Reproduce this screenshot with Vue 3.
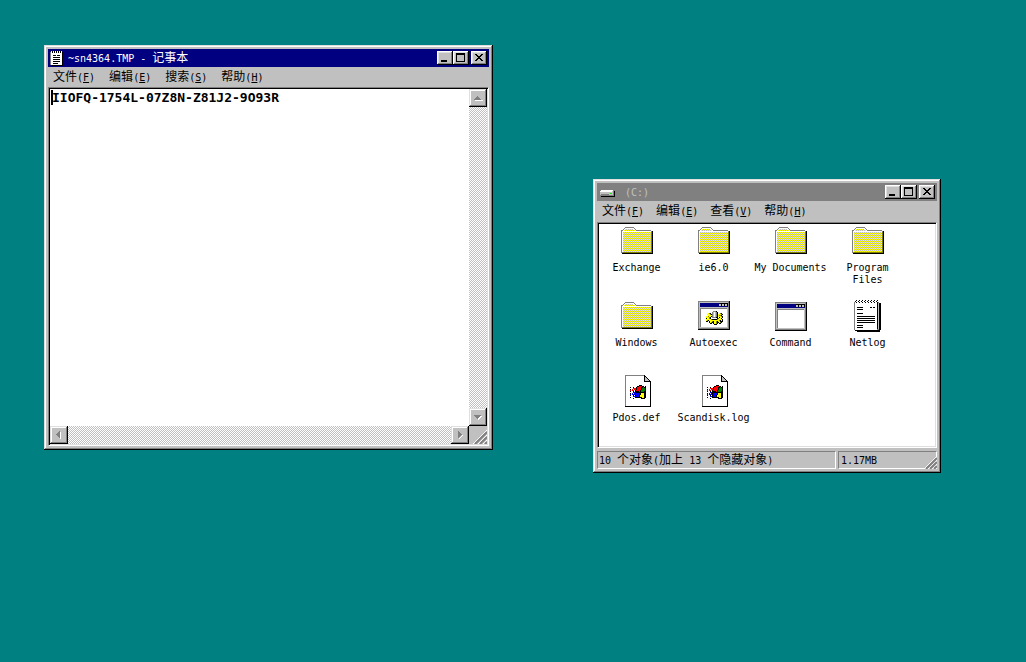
<script setup>
import { ref } from 'vue'

const noteMenus = [['文件', 'F'], ['编辑', 'E'], ['搜索', 'S'], ['帮助', 'H']]
const driveMenus = [['文件', 'F'], ['编辑', 'E'], ['查看', 'V'], ['帮助', 'H']]
const note = ref('IIOFQ-1754L-07Z8N-Z81J2-9O93R')

const files = [
  { name: 'Exchange', kind: 'folder' },
  { name: 'ie6.0', kind: 'folder' },
  { name: 'My Documents', kind: 'folder' },
  { name: 'Program Files', kind: 'folder' },
  { name: 'Windows', kind: 'folder' },
  { name: 'Autoexec', kind: 'batch' },
  { name: 'Command', kind: 'app' },
  { name: 'Netlog', kind: 'text' },
  { name: 'Pdos.def', kind: 'file' },
  { name: 'Scandisk.log', kind: 'file' },
]

const palette = { k: '#000', y: '#ff0', o: '#808000', g: '#808080', w: '#fff', s: '#c0c0c0', r: '#f00', n: '#008000', b: '#00f' }

function pixels(rows) {
  const out = []
  rows.forEach((row, y) => {
    let x = 0
    while (x < row.length) {
      let end = x + 1
      while (end < row.length && row[end] === row[x]) end++
      if (palette[row[x]]) out.push({ x, y, w: end - x, fill: palette[row[x]] })
      x = end
    }
  })
  return out
}

const gear = pixels([
  '.......gggk......',
  '......gswsgk.....',
  '..yok.gswsgk.yok.',
  '.yyyokgswsgkyyyok',
  '..yyyygswsgkyook.',
  'yyoyykgswsgkyyyok',
  'yyyok.ggggkk.kyyk',
  'kyyok......koyyk.',
  'yyyyyokkkkkoyyyyk',
  'yokyyyyyyyyyyokyk',
  'kk.kyyokyyokyykkk',
  '...kyokkyyokkyok.',
  '....kk.kyyok.kk..',
  '........kkk......',
])

const flag = pixels([
  '.........kkk....',
  '.......kkrrrkk.k',
  'k..k..krrrrkknkk',
  '...rrrkrrrrknnnk',
  'k.r.rrkrrrrknnnk',
  'r.rr.krrrrknnnnk',
  'k..k.kkkkrknnnkk',
  '...bbkkkkkkkkkkk',
  'k.b.bkbbbbkyyykk',
  'b.bbbkbbbbkyyykk',
  'k..k.kbbbkyyyykk',
  '...bbkbbbkyyyykk',
  'k....kkkkkkkyykk',
  '...k.......kkkk.',
])

function runs(text) {
  return text.match(/[\u4e00-\u9fff]+|[^\u4e00-\u9fff]+/g).map((t) => ({ t, latin: !/[\u4e00-\u9fff]/.test(t) }))
}
</script>

<template>
  <main class="desktop">
    <svg class="defs" width="0" height="0" aria-hidden="true">
      <defs>
        <pattern id="dither" width="2" height="2" patternUnits="userSpaceOnUse">
          <rect width="2" height="2" fill="#c0c0c0" />
          <rect width="1" height="1" fill="#ff0" />
          <rect x="1" y="1" width="1" height="1" fill="#ff0" />
        </pattern>
      </defs>
    </svg>

    <section class="window notepad">
      <header class="titlebar active">
        <svg class="title-icon" width="16" height="16" shape-rendering="crispEdges" aria-hidden="true">
          <path fill="#000" d="M2 2h11v14H2z" />
          <path fill="#fff" d="M1 2h11v13H1z" />
          <path fill="#808080" d="M0 2h1v13H0z" />
          <path fill="#000" d="M2 1h1v2H2zM4 1h1v2H4zM6 1h1v2H6zM8 1h1v2H8zM10 1h1v2h-1zM3 5h3v1H3zM7 5h3v1H7zM3 7h7v1H3zM3 9h7v1H3zM3 11h7v1H3zM3 13h5v1H3z" />
          <path fill="#fff" d="M1 1h1v1H1zM3 1h1v1H3zM5 1h1v1H5zM7 1h1v1H7zM9 1h1v1H9zM11 1h1v1h-1z" />
        </svg>
        <h1 class="title"><span v-for="(r, i) in runs('~sn4364.TMP - 记事本')" :key="i" :class="{ latin: r.latin }">{{ r.t }}</span></h1>
        <div class="controls">
          <button type="button" class="control" aria-label="最小化"><svg width="12" height="10" shape-rendering="crispEdges"><path d="M2 7h6v2H2z" /></svg></button>
          <button type="button" class="control" aria-label="最大化"><svg width="12" height="10" shape-rendering="crispEdges"><path fill-rule="evenodd" d="M1 0h9v9H1zM2 2v6h7V2z" /></svg></button>
          <button type="button" class="control close" aria-label="关闭"><svg width="12" height="10" shape-rendering="crispEdges"><path d="M2 1h2v1H2zM8 1h2v1H8zM3 2h2v1H3zM7 2h2v1H7zM4 3h4v1H4zM5 4h2v1H5zM4 5h4v1H4zM3 6h2v1H3zM7 6h2v1H7zM2 7h2v1H2zM8 7h2v1H8z" /></svg></button>
        </div>
      </header>
      <nav class="menubar">
        <button v-for="m in noteMenus" :key="m[0]" type="button" class="menu">{{ m[0] }}<span class="latin">(<u>{{ m[1] }}</u>)</span></button>
      </nav>
      <div class="sunken editor">
        <div class="paper">
          <textarea v-model="note" class="text" aria-label="文本" spellcheck="false"></textarea>
          <span class="caret"></span>
        </div>
        <div class="scroll vertical">
          <button type="button" class="arrow" aria-label="向上"><svg width="14" height="14" shape-rendering="crispEdges"><path fill="#fff" d="M4 9h8v1H4z" /><path fill="#808080" d="M6 5h1v1H6zM5 6h3v1H5zM4 7h5v1H4zM3 8h7v1H3z" /></svg></button>
          <button type="button" class="arrow" aria-label="向下"><svg width="14" height="14" shape-rendering="crispEdges"><path fill="#fff" d="M9 6h2v1H9zM8 7h2v1H8zM7 8h2v1H7zM7 9h1v1H7z" /><path fill="#808080" d="M3 5h7v1H3zM4 6h5v1H4zM5 7h3v1H5zM6 8h1v1H6z" /></svg></button>
        </div>
        <div class="scroll horizontal">
          <button type="button" class="arrow" aria-label="向左"><svg width="14" height="14" shape-rendering="crispEdges"><path fill="#fff" d="M8 4h1v7H8z" /><path fill="#808080" d="M7 3h1v7H7zM6 4h1v5H6zM5 5h1v3H5zM4 6h1v1H4z" /></svg></button>
          <button type="button" class="arrow" aria-label="向右"><svg width="14" height="14" shape-rendering="crispEdges"><path fill="#fff" d="M9 7h1v1H9zM8 8h1v1H8zM7 9h1v1H7zM6 10h1v1H6z" /><path fill="#808080" d="M5 3h1v7H5zM6 4h1v5H6zM7 5h1v3H7zM8 6h1v1H8z" /></svg></button>
        </div>
        <svg class="grip" width="18" height="18" aria-hidden="true">
          <path stroke="#fff" d="M4 18L18 4M9 18l9-9M14 18l4-4" />
          <path stroke="#808080" stroke-width="2" d="M6 18L18 6M11 18l7-7M16 18l2-2" />
        </svg>
      </div>
    </section>

    <section class="window drive">
      <header class="titlebar">
        <svg class="title-icon" width="16" height="16" shape-rendering="crispEdges" aria-hidden="true">
          <path fill="#000" d="M2 7h14v6H2z" /><path fill="#808080" d="M1 6h14v6H1z" />
          <path fill="#c0c0c0" d="M1 7h13v4H1z" /><path fill="#fff" d="M2 6h12v1H2zM1 7h12v1H1z" />
          <path fill="#808080" d="M2 10h8v1H2z" /><path fill="#0f0" d="M11 9h2v1h-2z" />
        </svg>
        <h2 class="title"><span class="latin">(C:)</span></h2>
        <div class="controls">
          <button type="button" class="control" aria-label="最小化"><svg width="12" height="10" shape-rendering="crispEdges"><path d="M2 7h6v2H2z" /></svg></button>
          <button type="button" class="control" aria-label="最大化"><svg width="12" height="10" shape-rendering="crispEdges"><path fill-rule="evenodd" d="M1 0h9v9H1zM2 2v6h7V2z" /></svg></button>
          <button type="button" class="control close" aria-label="关闭"><svg width="12" height="10" shape-rendering="crispEdges"><path d="M2 1h2v1H2zM8 1h2v1H8zM3 2h2v1H3zM7 2h2v1H7zM4 3h4v1H4zM5 4h2v1H5zM4 5h4v1H4zM3 6h2v1H3zM7 6h2v1H7zM2 7h2v1H2zM8 7h2v1H8z" /></svg></button>
        </div>
      </header>
      <nav class="menubar">
        <button v-for="m in driveMenus" :key="m[0]" type="button" class="menu">{{ m[0] }}<span class="latin">(<u>{{ m[1] }}</u>)</span></button>
      </nav>
      <div class="sunken files">
        <button v-for="f in files" :key="f.name" type="button" class="file">
          <svg width="32" height="32" shape-rendering="crispEdges" aria-hidden="true">
            <g v-if="f.kind === 'folder'">
              <path fill="#000" d="M1 6h31v23H1z" />
              <path fill="#808080" d="M0 5h2V4h1V3h1V2h9v1h1v1h1v1h15v1h1v22H0z" />
              <path fill="#fff" d="M1 6h1V5h1V4h1V3h9v1h1v1h1v1h15v21H1z" />
              <path fill="#808000" d="M30 7h1v21H2v-1h28z" />
              <path fill="url(#dither)" d="M2 7h28v20H2zM4 4h8v1h2v1H3V5h1z" />
              <path fill="#808080" d="M0 6h1v21H0z" />
            </g>
            <g v-else-if="f.kind === 'batch' || f.kind === 'app'" :transform="f.kind === 'batch' ? 'translate(0 1)' : 'translate(0 2)'">
              <path fill="#000" d="M0 0h32v29H0z" />
              <path fill="#808080" d="M0 0h31v28H0z" />
              <path fill="#c0c0c0" d="M1 1h29v26H1z" />
              <path fill="#000080" d="M2 2h28v4H2z" />
              <path fill="#000" d="M21 2h9v3h-9z" /><path fill="#c0c0c0" d="M21 3h2v2h-2zM24 3h2v2h-2zM27 3h2v2h-2z" />
              <path fill="#808080" d="M2 7h27v19H2z" />
              <path fill="#fff" d="M3 8h26v18H3z" />
              <g v-if="f.kind === 'batch'" transform="translate(8 10)">
                <rect v-for="(p, i) in gear" :key="i" :x="p.x" :y="p.y" :width="p.w" height="1" :fill="p.fill" />
              </g>
            </g>
            <g v-else-if="f.kind === 'text'">
              <path fill="#000" d="M4 3h25v27h-1v2H5v-1H4z" />
              <path fill="#808080" d="M2 2h25v28H2z" />
              <path fill="#fff" d="M3 2h22v28H3z" />
              <path fill="#c0c0c0" d="M26 3h1v26h-1z" /><path fill="#000" d="M25 3h1v26h-1zM3 30h22v1H3z" />
              <path v-for="n in 8" :key="n" fill="#000" :d="`M${n * 3} 1h1v1h-1zM${n * 3 + 1} 0h1v1h-1zM${n * 3 + 1} 2h1v1h-1z`" />
              <path fill="#000" d="M5 7h6v1H5zM18 7h2v1h-2zM21 7h2v1h-2zM5 9h6v1H5zM5 13h6v1H5zM5 16h18v1H5zM5 18h18v1H5zM5 20h18v1H5zM5 22h18v1H5zM5 25h6v1H5zM5 27h6v1H5z" />
            </g>
            <g v-else>
              <path fill="#000" d="M4 0h20v1h1v1h1v1h1v1h1v1h1v1h1v26H4z" />
              <path fill="#808080" d="M4 0h19v31H4z" />
              <path fill="#fff" d="M5 1h18v6h6v24H5z" />
              <path fill="#c0c0c0" d="M24 2h1v1h1v1h1v1h1v1h-4z" />
              <g transform="translate(9 10)">
                <rect v-for="(p, i) in flag" :key="i" :x="p.x" :y="p.y" :width="p.w" height="1" :fill="p.fill" />
              </g>
            </g>
          </svg>
          <span class="name">{{ f.name }}</span>
        </button>
      </div>
      <footer class="status">
        <p class="panel count"><span v-for="(r, i) in runs('10 个对象(加上 13 个隐藏对象)')" :key="i" :class="{ latin: r.latin }">{{ r.t }}</span></p>
        <p class="panel size"><span class="latin">1.17MB</span></p>
        <svg class="grip corner" width="14" height="14" aria-hidden="true">
          <path stroke="#fff" d="M1 14L14 1M5 14l9-9M9 14l5-5" />
          <path stroke="#808080" stroke-width="2" d="M3 14L14 3M7 14l7-7M11 14l3-3" />
        </svg>
      </footer>
    </section>
  </main>
</template>

<style>
body { margin: 0; background: #008080; }
</style>

<style scoped>
.desktop {
  position: relative;
  min-height: 100vh;
  overflow: hidden;
  background: #008080;
  color: #000;
  font: 12px/16px "DejaVu Sans Mono", "Noto Sans CJK SC", monospace;
}
.defs { position: absolute; }
.latin { font-size: 10px; white-space: pre; }
button { margin: 0; padding: 0; border: 0; border-radius: 0; background: none; color: inherit; font: inherit; }
h1, h2, p { margin: 0; font: inherit; }
svg { display: block; flex: none; }
.window {
  position: absolute;
  box-sizing: border-box;
  display: flex;
  flex-direction: column;
  padding: 4px;
  background: #c0c0c0;
  box-shadow: inset -1px -1px #000, inset 1px 1px #dfdfdf, inset -2px -2px #808080, inset 2px 2px #fff;
}
.notepad { left: 44px; top: 45px; width: 449px; height: 405px; }
.drive { left: 593px; top: 179px; width: 348px; height: 294px; }
.titlebar { display: flex; align-items: center; flex: none; height: 18px; padding: 0 2px; background: #808080; color: #c0c0c0; }
.active { background: #000080; color: #fff; }
.title { flex: 1; padding-left: 2px; white-space: nowrap; }
.drive .title { padding-left: 10px; }
.controls { display: flex; }
.control {
  width: 16px; height: 14px; padding: 2px;
  background: #c0c0c0;
  box-shadow: inset -1px -1px #000, inset 1px 1px #fff, inset -2px -2px #808080, inset 2px 2px #dfdfdf;
}
.close { margin-left: 2px; }
.menubar { display: flex; flex: none; gap: 14px; height: 20px; padding: 0 5px; }
.drive .menubar { gap: 12px; height: 21px; }
.menu { line-height: 20px; white-space: nowrap; }
u { text-underline-offset: 1px; }
.sunken {
  flex: 1;
  min-height: 0;
  border: 1px solid;
  border-color: #808080 #fff #fff #808080;
  box-shadow: inset 1px 1px #000, inset -1px -1px #dfdfdf;
  background: #fff;
}
.editor { display: grid; grid-template: 1fr 18px / 1fr 18px; padding: 1px; }
.paper { position: relative; display: flex; min-width: 0; }
.text {
  flex: 1; min-width: 0; box-sizing: border-box; margin: 0; padding: 1px 0 0 2px;
  border: 0; outline: 0; resize: none; overflow: hidden; background: #fff; color: #000;
  font: bold 13px/16px "DejaVu Sans Mono", monospace;
}
.caret { position: absolute; left: 1px; top: 1px; width: 2px; height: 15px; background: #000; }
.scroll { display: flex; justify-content: space-between; background: repeating-conic-gradient(#c0c0c0 0 25%, #fff 0 50%) 0 0 / 2px 2px; }
.vertical { flex-direction: column; }
.arrow {
  width: 18px; height: 18px; padding: 2px;
  background: #c0c0c0;
  box-shadow: inset -1px -1px #000, inset 1px 1px #dfdfdf, inset -2px -2px #808080, inset 2px 2px #fff;
}
.grip { background: #c0c0c0; }
.files { display: grid; grid-template-columns: repeat(4, 77px); grid-auto-rows: 75px; align-content: start; padding: 2px 0 0; }
.file { display: flex; flex-direction: column; align-items: center; gap: 5px; }
.name { font-size: 10px; line-height: 12px; text-align: center; }
.status { position: relative; display: flex; flex: none; gap: 2px; padding-top: 3px; }
.panel { box-sizing: border-box; height: 18px; padding: 0 1px; border: 1px solid; border-color: #808080 #fff #fff #808080; line-height: 16px; white-space: nowrap; }
.count { flex: 1; }
.size { width: 99px; padding-left: 2px; }
.corner { position: absolute; right: 0; bottom: 0; background: none; }
</style>
